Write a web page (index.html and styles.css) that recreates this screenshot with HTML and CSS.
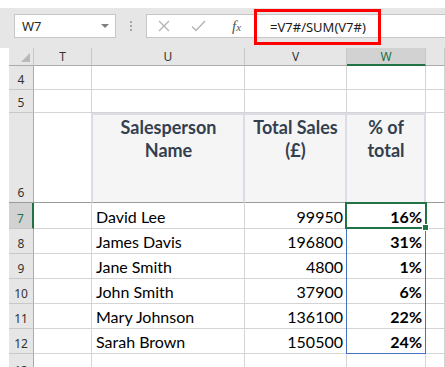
FILE: index.html
```html
<!DOCTYPE html>
<html lang="en">
<head>
<meta charset="UTF-8">
<title>Sales share</title>
<link rel="stylesheet" href="styles.css">
</head>
<body>
    <div class="toolbar">
        <div class="namebox">
            <span>W7</span>
            <span class="caret"></span>
        </div>
        <div class="dots"><i></i><i></i><i></i></div>
        <div class="formula-bar">
            <svg class="icon" width="12" height="12" viewBox="0 0 12 12">
                <path d="M1 1 L11 11 M11 1 L1 11" stroke="#b3b3b3" stroke-width="1.3" fill="none"/>
            </svg>
            <svg class="icon" width="15" height="12" viewBox="0 0 15 12">
                <path d="M1 6.5 L5 10.5 L14 1" stroke="#b3b3b3" stroke-width="1.4" fill="none"/>
            </svg>
            <span class="fx">f<small>x</small></span>
            <span class="formula">=V7#/SUM(V7#)</span>
        </div>
    </div>

    <div class="sheet">
        <div class="corner"><span class="tri"></span></div>
        <div class="colhead">T</div>
        <div class="colhead">U</div>
        <div class="colhead">V</div>
        <div class="colhead active">W</div>
        <div class="colhead"></div>

        <div class="rowhead">4</div>
        <div class="cell"></div><div class="cell"></div><div class="cell"></div><div class="cell"></div><div class="cell"></div>

        <div class="rowhead">5</div>
        <div class="cell"></div><div class="cell"></div><div class="cell"></div><div class="cell"></div><div class="cell"></div>

        <div class="rowhead frozen">6</div>
        <div class="cell frozen"></div>
        <div class="cell frozen th first">Salesperson<br>Name</div>
        <div class="cell frozen th">Total Sales<br>(£)</div>
        <div class="cell frozen th">% of<br>total</div>
        <div class="cell frozen"></div>

        <div class="rowhead active">7</div>
        <div class="cell"></div>
        <div class="cell name">David Lee</div>
        <div class="cell num">99950</div>
        <div class="cell pct current">
            16%
            <span class="spill"></span>
            <span class="selected"><span class="handle"></span></span>
        </div>
        <div class="cell"></div>

        <div class="rowhead">8</div>
        <div class="cell"></div>
        <div class="cell name">James Davis</div>
        <div class="cell num">196800</div>
        <div class="cell pct">31%</div>
        <div class="cell"></div>

        <div class="rowhead">9</div>
        <div class="cell"></div>
        <div class="cell name">Jane Smith</div>
        <div class="cell num">4800</div>
        <div class="cell pct">1%</div>
        <div class="cell"></div>

        <div class="rowhead">10</div>
        <div class="cell"></div>
        <div class="cell name">John Smith</div>
        <div class="cell num">37900</div>
        <div class="cell pct">6%</div>
        <div class="cell"></div>

        <div class="rowhead">11</div>
        <div class="cell"></div>
        <div class="cell name">Mary Johnson</div>
        <div class="cell num">136100</div>
        <div class="cell pct">22%</div>
        <div class="cell"></div>

        <div class="rowhead">12</div>
        <div class="cell"></div>
        <div class="cell name">Sarah Brown</div>
        <div class="cell num">150500</div>
        <div class="cell pct">24%</div>
        <div class="cell"></div>

        <div class="rowhead cut">13</div>
        <div class="cell"></div><div class="cell"></div><div class="cell"></div><div class="cell"></div><div class="cell"></div>
    </div>
</body>
</html>
```

FILE: styles.css
```css
body {
    margin: 0;
    padding: 8px 0 0 0;
    background-color: #fff;
    font-family: "Noto Sans", "Open Sans", sans-serif;
    overflow: hidden;
}

/* formula toolbar */
.toolbar {
    display: flex;
    align-items: center;
    height: 40px;
    background-color: #e6e6e6;
    padding-left: 14px;
    box-sizing: border-box;
    padding-bottom: 4px;
}
.namebox {
    display: flex;
    align-items: center;
    justify-content: space-between;
    width: 102px;
    height: 24px;
    box-sizing: border-box;
    border: 1px solid #c6c6c6;
    background-color: #fff;
    padding: 0 6px 0 7px;
    font-size: 13px;
    color: #262626;
}
.caret {
    width: 0;
    height: 0;
    border-left: 4px solid transparent;
    border-right: 4px solid transparent;
    border-top: 4px solid #7f7f7f;
}
.dots {
    display: flex;
    flex-direction: column;
    gap: 2px;
    margin: 0 14px 0 14px;
}
.dots i {
    display: block;
    width: 2px;
    height: 2px;
    background-color: #a6a6a6;
}
.formula-bar {
    flex: 1;
    display: flex;
    align-items: center;
    height: 24px;
    box-sizing: border-box;
    border: 1px solid #c6c6c6;
    border-right: none;
    background-color: #fff;
    padding-left: 11px;
}
.formula-bar .icon {
    margin-right: 21px;
}
.formula-bar .icon + .icon {
    margin-right: 26px;
}
.fx {
    font-family: "Liberation Serif", serif;
    font-style: italic;
    font-size: 15px;
    color: #555;
    margin-right: 13px;
}
.fx small {
    font-size: 11px;
}
.formula {
    display: flex;
    align-items: center;
    width: 127px;
    height: 36px;
    box-sizing: border-box;
    border: 3px solid #ff0000;
    padding: 0 0 0 13px;
    font-size: 13px;
    color: #1a1a1a;
    margin-top: 1px;
}

/* sheet grid */
.sheet {
    display: grid;
    grid-template-columns: 25px 58px 153px 102px 79px 1fr;
    grid-template-rows: 18px 24px 23px 90px 26px 25px 25px 25px 25px 25px 25px;
    margin-left: 9px;
}
.corner,
.colhead {
    background-color: #e6e6e6;
    border-right: 1px solid #c8c8c8;
    border-bottom: 1px solid #ababab;
    box-sizing: border-box;
}
.corner {
    position: relative;
}
.tri {
    position: absolute;
    right: 3px;
    bottom: 3px;
    width: 0;
    height: 0;
    border-left: 9px solid transparent;
    border-bottom: 9px solid #b8b8b8;
}
.colhead {
    display: flex;
    justify-content: center;
    align-items: center;
    font-size: 12px;
    color: #333;
}
.colhead.active {
    background-color: #d2d2d2;
    border-bottom: 2px solid #217346;
    color: #217346;
}
.rowhead {
    display: flex;
    justify-content: center;
    align-items: flex-end;
    padding-bottom: 1px;
    background-color: #e6e6e6;
    border-right: 1px solid #ababab;
    border-bottom: 1px solid #c8c8c8;
    box-sizing: border-box;
    font-size: 12px;
    color: #333;
}
.rowhead.active {
    background-color: #d2d2d2;
    border-right: 2px solid #217346;
    color: #217346;
}
.rowhead.cut {
    align-items: flex-start;
    padding-top: 8px;
}
.cell {
    border-right: 1px solid #d4d4d4;
    border-bottom: 1px solid #d4d4d4;
    box-sizing: border-box;
    display: flex;
    align-items: flex-end;
    padding: 0 3px 2px 4px;
    font-family: "Lato", sans-serif;
    font-size: 16px;
    color: #000;
    white-space: nowrap;
}
.frozen {
    border-bottom: 1px solid #9b9b9b;
}
.th {
    background-color: #f5f5f5;
    border-top: 2px solid #dcdbe6;
    border-right: 2px solid #dcdbe6;
    justify-content: center;
    align-items: flex-start;
    text-align: center;
    padding-top: 1px;
    font-size: 18px;
    line-height: 23px;
    font-weight: bold;
    color: #333f4f;
}
.th.first {
    border-left: 2px solid #dcdbe6;
    margin-left: -1px;
}
.num,
.pct {
    justify-content: flex-end;
}
.pct {
    font-weight: bold;
}

/* selection overlays on W7 */
.current {
    position: relative;
}
.spill {
    position: absolute;
    left: -1px;
    top: -1px;
    width: 80px;
    height: 152px;
    box-sizing: border-box;
    border: 1px solid #4472c4;
    pointer-events: none;
}
.selected {
    position: absolute;
    left: -2px;
    top: -1px;
    width: 82px;
    height: 27px;
    box-sizing: border-box;
    border: 2px solid #217346;
    pointer-events: none;
}
.handle {
    position: absolute;
    right: -4px;
    bottom: -4px;
    width: 5px;
    height: 5px;
    background-color: #217346;
    border: 1px solid #fff;
}
```
